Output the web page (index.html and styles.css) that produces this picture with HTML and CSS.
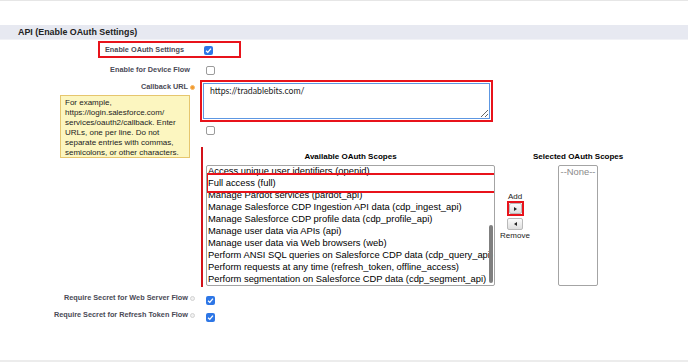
FILE: index.html
```html
<!DOCTYPE html>
<html>
<head>
    <meta charset="utf-8">
    <title>API (Enable OAuth Settings)</title>
    <link rel="stylesheet" href="styles.css">
</head>
<body>
<div class="page">
    <div class="top-rule"></div>
    <div class="section-head">API (Enable OAuth Settings)</div>
    <div class="form">
        <div class="row row-flag">
            <div class="flag-box">
                <span class="flag-label">Enable OAuth Settings</span>
                <span class="check checked"><svg viewBox="0 0 10 10"><path d="M2.3 5.3 L4.2 7.1 L7.7 2.9" fill="none" stroke="#fff" stroke-width="1.5"/></svg></span>
            </div>
        </div>
        <div class="row row-device">
            <span class="label">Enable for Device Flow</span>
            <span class="check"></span>
        </div>
        <div class="row row-callback">
            <span class="label has-icon">Callback URL<i class="info info-orange"></i></span>
            <div class="callback-box">
                <textarea class="callback-input" spellcheck="false">https://tradablebits.com/</textarea>
            </div>
            <div class="tip">For example,<br>https://login.salesforce.com/<br>services/oauth2/callback. Enter<br>URLs, one per line. Do not<br>separate entries with commas,<br>semicolons, or other characters.</div>
        </div>
        <div class="row row-idtoken">
            <span class="label"></span>
            <span class="check"></span>
        </div>
        <div class="row row-scopes">
            <span class="label"></span>
            <div class="scopes">
                <div class="scope-col avail">
                    <div class="scope-title">Available OAuth Scopes</div>
                    <div class="listbox">
                        <ul class="options">
                            <li>Access unique user identifiers (openid)</li>
                            <li>Full access (full)</li>
                            <li>Manage Pardot services (pardot_api)</li>
                            <li>Manage Salesforce CDP Ingestion API data (cdp_ingest_api)</li>
                            <li>Manage Salesforce CDP profile data (cdp_profile_api)</li>
                            <li>Manage user data via APIs (api)</li>
                            <li>Manage user data via Web browsers (web)</li>
                            <li>Perform ANSI SQL queries on Salesforce CDP data (cdp_query_api)</li>
                            <li>Perform requests at any time (refresh_token, offline_access)</li>
                            <li>Perform segmentation on Salesforce CDP data (cdp_segment_api)</li>
                        </ul>
                        <div class="thumb"></div>
                        <div class="mark-full"></div>
                    </div>
                </div>
                <div class="scope-col mover">
                    <div class="mover-text">Add</div>
                    <div class="add-box">
                        <span class="arrow-btn"><i class="tri tri-right"></i></span>
                    </div>
                    <span class="arrow-btn remove-btn"><i class="tri tri-left"></i></span>
                    <div class="mover-text">Remove</div>
                </div>
                <div class="scope-col selected">
                    <div class="scope-title">Selected OAuth Scopes</div>
                    <div class="listbox small-box">
                        <div class="none">--None--</div>
                    </div>
                </div>
            </div>
        </div>
        <div class="row row-web">
            <span class="label has-icon">Require Secret for Web Server Flow<i class="info info-gray"></i></span>
            <span class="check checked"><svg viewBox="0 0 10 10"><path d="M2.3 5.3 L4.2 7.1 L7.7 2.9" fill="none" stroke="#fff" stroke-width="1.5"/></svg></span>
        </div>
        <div class="row row-refresh">
            <span class="label has-icon">Require Secret for Refresh Token Flow<i class="info info-gray"></i></span>
            <span class="check checked"><svg viewBox="0 0 10 10"><path d="M2.3 5.3 L4.2 7.1 L7.7 2.9" fill="none" stroke="#fff" stroke-width="1.5"/></svg></span>
        </div>
    </div>
    <div class="bottom-rule"></div>
</div>
</body>
</html>
```

FILE: styles.css
```css
html, body {
    margin: 0;
    height: 100%;
    background: #fff;
    overflow: hidden;
}

body {
    font-family: "Liberation Sans", Arial, sans-serif;
    color: #000;
}

.page {
    display: flex;
    flex-direction: column;
    height: 362px;
}

.top-rule {
    height: 1px;
    background: #e6e6e6;
}

.section-head {
    margin-top: 24px;
    height: 15px;
    line-height: 15px;
    padding-left: 18px;
    background: #e7e9f1;
    border-bottom: 1px solid #f1f2f6;
    box-sizing: border-box;
    font-size: 8.9px;
    font-weight: bold;
    color: #222;
}

.form {
    flex: 1;
}

.row {
    display: flex;
    align-items: flex-start;
    position: relative;
}

.label {
    flex: none;
    width: 201px;
    box-sizing: border-box;
    padding-right: 11px;
    text-align: right;
    font-size: 7.3px;
    line-height: 9px;
    font-weight: bold;
    color: #4a4a56;
    white-space: nowrap;
}

.label.has-icon {
    padding-right: 6px;
}

.info {
    display: inline-block;
    width: 5px;
    height: 5px;
    margin-left: 2px;
    border-radius: 50%;
    vertical-align: -0.5px;
    box-sizing: border-box;
}

.info-orange {
    background: #f29a2e;
    border: 1px solid #f7b865;
}

.info-gray {
    background: #f1f1f1;
    border: 1px solid #d2d2d2;
}

.check {
    flex: none;
    display: block;
    width: 9px;
    height: 9px;
    margin-left: 5px;
    box-sizing: border-box;
    border: 1px solid #9b9b9b;
    border-radius: 2px;
    background: #fff;
}

.check.checked {
    border: none;
    background: #2d76e6;
}

.check svg {
    display: block;
    width: 9px;
    height: 9px;
}

/* enable oauth row, highlighted */
.row-flag {
    margin-top: 1px;
}

.flag-box {
    margin-left: 98px;
    width: 143px;
    height: 17px;
    box-sizing: border-box;
    border: 2px solid #e8131b;
    display: flex;
    align-items: center;
    padding-left: 5px;
}

.flag-label {
    font-size: 7.3px;
    line-height: 9px;
    font-weight: bold;
    color: #4a4a56;
}

.flag-box .check {
    margin-left: 20px;
    margin-top: 1px;
}

.row-device {
    height: 22px;
}

.row-device .label {
    padding-top: 7px;
}

.row-device .check {
    margin-top: 8px;
}

/* callback url */
.row-callback {
    height: 42px;
}

.row-callback .label {
    padding-top: 2px;
}

.callback-box {
    margin-left: -1px;
    width: 293px;
    height: 42px;
    box-sizing: border-box;
    border: 2px solid #e8131b;
    padding: 1px;
}

.callback-input {
    display: block;
    width: 100%;
    height: 100%;
    box-sizing: border-box;
    margin: 0;
    border: 1px solid #5d97e2;
    padding: 1px 6px;
    font-family: Lato, "Liberation Sans", sans-serif;
    font-size: 8.7px;
    line-height: 11px;
    color: #222;
    resize: vertical;
    outline: none;
}

.tip {
    position: absolute;
    left: 60px;
    top: 15px;
    width: 130px;
    height: 63px;
    box-sizing: border-box;
    padding: 2px 4px;
    background: #fcf6c0;
    border: 1px solid #e6c66e;
    font-size: 8px;
    line-height: 10px;
    color: #222;
    white-space: nowrap;
    z-index: 2;
}

.row-idtoken {
    height: 17px;
}

.row-idtoken .check {
    margin-top: 4px;
}

/* oauth scopes picker */
.row-scopes {
    margin-top: 8px;
}

.scopes {
    display: flex;
    border-left: 2px solid #d2121a;
    padding: 5px 0 1px 3px;
}

.scope-title {
    font-size: 8px;
    line-height: 10px;
    font-weight: bold;
    text-align: center;
    white-space: nowrap;
    margin-bottom: 3px;
}

.avail {
    width: 289px;
}

.listbox {
    position: relative;
    height: 121px;
    box-sizing: border-box;
    border: 1px solid #a4a4a4;
    border-radius: 2px;
    background: #fff;
    overflow: hidden;
}

.options {
    list-style: none;
    margin: -1px 0 0;
    padding: 0 0 0 1px;
    font-size: 9.4px;
    line-height: 12px;
    white-space: nowrap;
}

.thumb {
    position: absolute;
    right: 1px;
    top: 59px;
    width: 4px;
    height: 58px;
    border-radius: 2px;
    background: #7f7f7f;
}

.mark-full {
    position: absolute;
    left: -1px;
    top: 7px;
    width: 291px;
    height: 20px;
    box-sizing: border-box;
    border: 2px solid #e8131b;
}

.mover {
    width: 36px;
    padding: 40px 0 0 2px;
    display: flex;
    flex-direction: column;
    align-items: center;
}

.mover-text {
    font-size: 8px;
    line-height: 9px;
    color: #222;
}

.add-box {
    width: 17px;
    height: 15px;
    box-sizing: border-box;
    border: 2px solid #e8131b;
    display: flex;
    align-items: center;
    justify-content: center;
}

.arrow-btn {
    display: flex;
    align-items: center;
    justify-content: center;
    width: 13px;
    height: 11px;
    box-sizing: border-box;
    border: 1px solid #b9b9b9;
    border-radius: 2px;
    background: linear-gradient(#fbfbfb, #dedede);
}

.remove-btn {
    width: 16px;
    height: 12px;
    margin-top: 2px;
    margin-bottom: 1px;
}

.tri {
    display: block;
    width: 0;
    height: 0;
    border-top: 2.5px solid transparent;
    border-bottom: 2.5px solid transparent;
}

.tri-right {
    border-left: 3px solid #222;
}

.tri-left {
    border-right: 3px solid #222;
}

.selected {
    width: 90px;
}

.small-box {
    width: 40px;
    margin: 0 auto;
}

.none {
    font-size: 9.4px;
    line-height: 12px;
    color: #8a8a8a;
    text-align: center;
}

.row-web {
    height: 19px;
}

.row-web .label {
    padding-top: 6px;
}

.row-web .check {
    margin-top: 9px;
}

.row-refresh .label {
    padding-top: 4px;
}

.row-refresh .check {
    margin-top: 7px;
}

.bottom-rule {
    height: 2px;
    background: #ececec;
}
```
